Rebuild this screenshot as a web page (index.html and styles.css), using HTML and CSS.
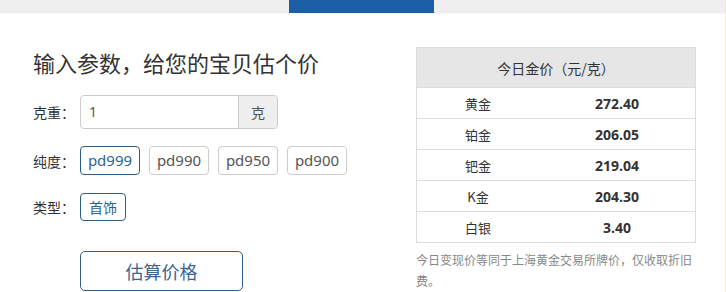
FILE: index.html
```html
<!DOCTYPE html>
<html lang="zh">
<head>
<meta charset="utf-8">
<link rel="stylesheet" href="styles.css">
</head>
<body>
<div class="page">
  <div class="topbar">
    <div class="tab"></div>
    <div class="tab active"></div>
    <div class="tab"></div>
  </div>
  <div class="main">
    <div class="form">
      <h1 class="title">输入参数，给您的宝贝估个价</h1>
      <div class="row row-weight">
        <span class="label">克重：</span>
        <div class="input-group">
          <div class="input">1</div>
          <div class="addon">克</div>
        </div>
      </div>
      <div class="row row-purity">
        <span class="label">纯度：</span>
        <div class="options">
          <span class="opt active">pd999</span>
          <span class="opt">pd990</span>
          <span class="opt">pd950</span>
          <span class="opt">pd900</span>
        </div>
      </div>
      <div class="row row-type">
        <span class="label">类型：</span>
        <div class="options">
          <span class="opt active small">首饰</span>
        </div>
      </div>
      <div class="row row-submit">
        <span class="label"></span>
        <button class="submit">估算价格</button>
      </div>
    </div>
    <div class="prices">
      <table class="price-table">
        <thead>
          <tr><th colspan="2">今日金价（元/克）</th></tr>
        </thead>
        <tbody>
          <tr><td class="name">黄金</td><td class="val">272.40</td></tr>
          <tr><td class="name">铂金</td><td class="val">206.05</td></tr>
          <tr><td class="name">钯金</td><td class="val">219.04</td></tr>
          <tr><td class="name">K金</td><td class="val">204.30</td></tr>
          <tr><td class="name">白银</td><td class="val">3.40</td></tr>
        </tbody>
      </table>
      <p class="note">今日变现价等同于上海黄金交易所牌价，仅收取折旧费。</p>
    </div>
  </div>
</div>
</body>
</html>
```

FILE: styles.css
```css
html, body {
  margin: 0;
  padding: 0;
  background: #fff;
}
body {
  font-family: "Noto Sans", "Noto Sans CJK SC", sans-serif;
  color: #333;
}
.page {
  width: 725px;
  height: 292px;
  border-right: 1px solid #efe9c4;
  overflow: hidden;
}
.topbar {
  height: 13px;
  background: #efefef;
  display: flex;
  border-bottom: 1px solid #f6f6f6;
}
.tab {
  width: 289px;
}
.tab.active {
  width: 145px;
  background: #1c5fa5;
}
.main {
  display: flex;
  padding-left: 33px;
}
.form {
  width: 383px;
}
.title {
  margin: 33px 0 0 0;
  font-size: 22px;
  line-height: 30px;
  font-weight: normal;
  color: #333;
  font-family: "Noto Sans CJK SC", sans-serif;
}
.row {
  display: flex;
  align-items: center;
}
.label {
  width: 47px;
  font-size: 14px;
  font-family: "Noto Sans CJK SC", sans-serif;
  color: #333;
}
.row-weight {
  margin-top: 18px;
}
.input-group {
  display: flex;
  width: 198px;
  height: 34px;
  border: 1px solid #ccc;
  border-radius: 4px;
  box-sizing: border-box;
  overflow: hidden;
}
.input {
  flex: 1;
  padding-left: 8px;
  font-size: 14px;
  line-height: 32px;
  color: #555;
}
.addon {
  width: 38px;
  background: #eee;
  border-left: 1px solid #ccc;
  text-align: center;
  font-size: 14px;
  line-height: 32px;
  color: #555;
  font-family: "Noto Sans CJK SC", sans-serif;
}
.row-purity {
  margin-top: 17px;
}
.options {
  display: flex;
  gap: 9px;
}
.opt {
  box-sizing: border-box;
  width: 60px;
  height: 29px;
  border: 1px solid #ccc;
  border-radius: 4px;
  font-size: 15px;
  line-height: 27px;
  text-align: center;
  color: #555;
}
.opt.active {
  border-color: #2f5f87;
  color: #2e6391;
}
.opt.small {
  width: 46px;
  height: 28px;
  line-height: 26px;
  font-size: 14px;
  font-family: "Noto Sans CJK SC", sans-serif;
}
.row-type {
  margin-top: 18px;
}
.row-submit {
  margin-top: 30px;
}
.submit {
  box-sizing: border-box;
  width: 163px;
  height: 40px;
  background: #fff;
  border: 1px solid #2f5f87;
  border-radius: 5px;
  font-size: 18px;
  font-family: "Noto Sans CJK SC", sans-serif;
  color: #3a6690;
  padding: 0;
}
.prices {
  width: 280px;
  margin-top: 33px;
}
.price-table {
  width: 280px;
  border-collapse: collapse;
  border: 1px solid #ddd;
}
.price-table th {
  height: 39px;
  background: #e6e6e6;
  font-weight: normal;
  font-size: 14px;
  font-family: "Noto Sans CJK SC", sans-serif;
  color: #333;
  padding: 0;
}
.price-table td {
  height: 30px;
  border-top: 1px solid #ddd;
  padding: 0;
  font-size: 13px;
}
.price-table .name {
  width: 122px;
  text-align: center;
  font-family: "Noto Sans CJK SC", sans-serif;
}
.price-table .val {
  text-align: center;
  font-weight: bold;
  font-family: "Open Sans", "Noto Sans", sans-serif;
  font-size: 14px;
  color: #333;
}
.note {
  margin: 6px 0 0 0;
  font-size: 12px;
  line-height: 21px;
  color: #888;
  font-family: "Noto Sans CJK SC", sans-serif;
}
```
